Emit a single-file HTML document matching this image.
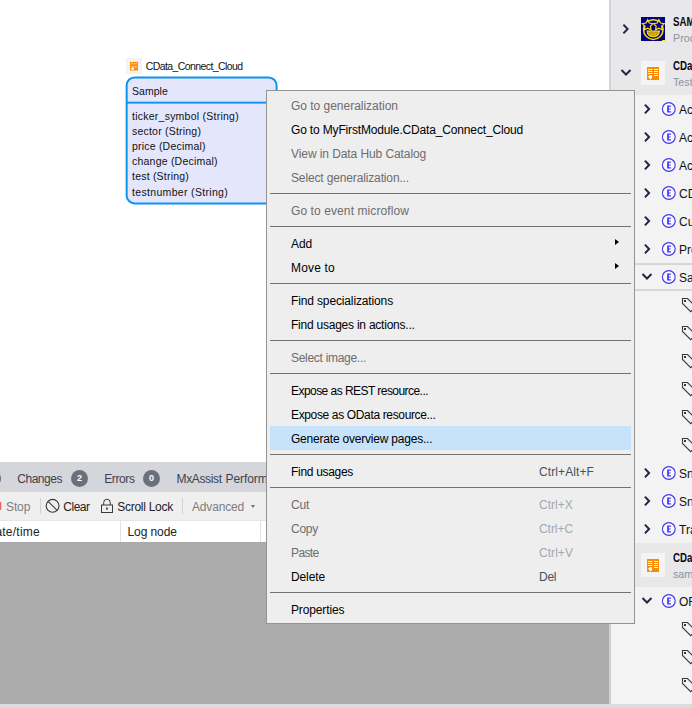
<!DOCTYPE html>
<html><head><meta charset="utf-8">
<style>
*{box-sizing:border-box;margin:0;padding:0}
html,body{width:692px;height:708px;overflow:hidden;background:#fff}
body{position:relative;font-family:"Liberation Sans",sans-serif;font-size:12px;color:#000}
.abs{position:absolute}
/* entity */
#entTitle{left:145.8px;top:60px;font-size:10.5px;color:#111;white-space:nowrap}
#ent{left:126px;top:76px;width:152px;height:129px;border:2px solid transparent}
#ent .hd{height:25px;border-bottom:2px solid transparent;padding:6.5px 0 0 4px;font-size:10.5px;color:#111}
#ent .at{padding:5.5px 0 0 4px;font-size:10.5px;line-height:15px;color:#111;white-space:nowrap}
#ent .at div:last-child{margin-top:1px}
/* bottom pane */
#tabs{left:0;top:462px;width:609px;height:30px;background:#d5d6db}
#tabs>span{position:absolute;top:9.5px;font-size:12px;color:#3a4252;white-space:nowrap}
.badge{position:absolute;top:8px;width:17px;height:17px;border-radius:50%;background:#6b707c;color:#fff;font-size:9px;font-weight:bold;text-align:center;line-height:17px}
#tool{left:0;top:492px;width:609px;height:28px;background:#efefef}
#tool>span{position:absolute;top:7.5px;font-size:12px;color:#222;white-space:nowrap}
#hdr{left:0;top:520px;width:609px;height:22px;background:#fff;border-top:1px solid #e6e6e6}
#hdr>span{position:absolute;top:3.5px;font-size:12px;color:#222;white-space:nowrap}
#grey{left:0;top:542px;width:609px;height:162px;background:#ababab}
#strip{left:609px;top:0;width:2px;height:704px;background:#d0d2d7}
#bot{left:0;top:704px;width:692px;height:4px;background:#dcdcde}
/* right panel */
#rp{left:611px;top:0;width:81px;height:704px;background:#f3f3f3;overflow:hidden}
.rh{position:absolute;left:0;width:81px;background:#e8e8eb}
.bold{position:absolute;left:62px;font-weight:bold;font-size:12px;transform:scaleX(.81);transform-origin:0 0;color:#0a0a0a;white-space:nowrap}
.sub{position:absolute;left:62px;font-size:11.5px;transform:scaleX(.93);transform-origin:0 0;color:#8d92a0;white-space:nowrap}
.trow{position:absolute;left:0;width:81px;height:28px}
.tx{position:absolute;left:68px;font-size:12px;color:#111;white-space:nowrap}
/* menu */
#menu{left:266px;top:90px;width:369px;height:534px;background:#eeeeee;border:1px solid #939393;padding:2px 3px}
.mi{height:24px;position:relative;font-size:12px;line-height:26px;padding-left:21px;white-space:nowrap;color:#000}
.mi.d{color:#6d6d6d}
.mi.hl{background:#c7e3fb}
.mi .sc{position:absolute;left:269px;top:0;color:#46525c}
.mi.d .sc{color:#a3a9af}
.mi .ar{position:absolute;left:345px;top:8px;width:0;height:0;border-left:4px solid #000;border-top:3.5px solid transparent;border-bottom:3.5px solid transparent}
.sep{height:9px;padding-top:4px}
.sep div{height:1px;background:#717171}
</style></head><body>

<div class="abs" style="left:126px;top:58px;width:16px;height:16px;background:#f3f3f3"></div>
<svg class="abs" style="left:129px;top:61px" width="10" height="10" viewBox="129 61 10 10"><rect x="130" y="62" width="8" height="8.500" fill="#ff8a00"/><path d="M131 63.800h2.600M134.400 63.800h2.600M131 66.800h2.600M134.400 66.800h2.600" stroke="#ffd9ad" stroke-width="1" fill="none"/><path d="M131 68.600l1.200 -1h1.600v1.600l-0.800 0.800h-1z" fill="#fff"/></svg>
<div class="abs" id="entTitle"><span class="fit" style="letter-spacing:-0.599px">CData_Connect_Cloud</span></div>
<svg class="abs" style="left:120px;top:70px" width="165" height="140" viewBox="120 70 165 140"><rect x="126.65" y="77.45" width="149.95" height="125.95" rx="8" ry="8" fill="#e4e6fc" stroke="#0b94f2" stroke-width="2"/><rect x="126.65" y="101.7" width="149.95" height="1.9" fill="#0b94f2"/></svg>
<div class="abs" id="ent">
  <div class="hd"><span class="fit" style="letter-spacing:0.048px">Sample</span></div>
  <div class="at"><div><span class="fit" style="letter-spacing:0.244px">ticker_symbol (String)</span></div><div><span class="fit" style="letter-spacing:0.211px">sector (String)</span></div><div><span class="fit" style="letter-spacing:0.207px">price (Decimal)</span></div><div><span class="fit" style="letter-spacing:0.219px">change (Decimal)</span></div><div><span class="fit" style="letter-spacing:0.210px">test (String)</span></div><div><span class="fit" style="letter-spacing:0.328px">testnumber (String)</span></div></div>
</div>

<div class="abs" id="tabs">
  <div class="badge" style="left:-16px"></div>
  <span style="left:17.2px"><span class="fit" style="letter-spacing:-0.448px">Changes</span></span><div class="badge" style="left:71px">2</div>
  <span style="left:104.2px"><span class="fit" style="letter-spacing:-0.393px">Errors</span></span><div class="badge" style="left:143px">0</div>
  <span style="left:176.5px"><span class="fit" style="letter-spacing:-0.363px">MxAssist</span></span><span style="left:225.6px;letter-spacing:-0.1px">Performance Bot</span>
</div>
<div class="abs" id="tool">
  <div class="abs" style="left:0;top:10px;width:1px;height:8px;background:#ee5f6a"></div><div class="abs" style="left:1px;top:10px;width:1px;height:8px;background:#f3cfd2"></div>
  <span style="left:6px;color:#7d7d7d"><span class="fit" style="letter-spacing:-0.122px">Stop</span></span>
  <div class="abs" style="left:40px;top:6px;width:1px;height:16px;background:#d2d2d2"></div>
  <svg class="abs" style="left:45px;top:6px" width="16" height="16" viewBox="0 0 16 16"><circle cx="7.6" cy="7.8" r="6.4" fill="none" stroke="#3a3a3a" stroke-width="1.1"/><path d="M3.100 3.300 L12.1 12.3" stroke="#3a3a3a" stroke-width="1.1"/></svg>
  <span style="left:63.3px"><span class="fit" style="letter-spacing:-0.477px">Clear</span></span>
  <svg class="abs" style="left:100px;top:6px" width="14" height="16" viewBox="0 0 14 16"><rect x="1.5" y="7" width="11" height="7.500" fill="none" stroke="#3a3a3a" stroke-width="1"/><path d="M3.700 7V4.500a3.300 3.300 0 0 1 6.600 0V7" fill="none" stroke="#3a3a3a" stroke-width="1"/><rect x="6.300" y="9.300" width="1.400" height="2.600" fill="#3a3a3a"/></svg>
  <span style="left:117.2px"><span class="fit" style="letter-spacing:-0.270px">Scroll Lock</span></span>
  <div class="abs" style="left:182px;top:6px;width:1px;height:16px;background:#d2d2d2"></div>
  <span style="left:192px;color:#7d7d7d"><span class="fit" style="letter-spacing:-0.159px">Advanced</span></span>
  <div class="abs" style="left:251px;top:13px;width:0;height:0;border-top:3.500px solid #707070;border-left:2.200px solid transparent;border-right:2.200px solid transparent"></div>
</div>
<div class="abs" id="hdr">
  <span style="left:-13.5px"><span class="fit" style="letter-spacing:0.227px">Date/time</span></span>
  <div class="abs" style="left:120px;top:0;width:1px;height:23px;background:#e2e2e2"></div>
  <span style="left:127.5px"><span class="fit" style="letter-spacing:-0.083px">Log node</span></span>
  <div class="abs" style="left:260px;top:0;width:1px;height:23px;background:#e2e2e2"></div>
</div>
<div class="abs" id="grey"></div>
<div class="abs" id="strip"></div>

<div class="abs" id="rp">
  <div class="rh" style="top:0;height:95px"></div>
  <div class="rh" style="top:543px;height:44px"></div>
  <svg class="abs" style="left:0;top:0" width="81" height="704" viewBox="0 0 81 704"><path d="M12.4 24.6 L16.6 29 L12.4 33.4" fill="none" stroke="#1e2840" stroke-width="2"/><rect x="30" y="17" width="24" height="24" fill="#000082"/><circle cx="42.299999999999955" cy="29.6" r="9.8" fill="none" stroke="#f7d716" stroke-width="1.5"/><polygon points="36.7,19.7 38.3,23.0 42.0,23.6 39.4,26.2 40.0,29.8 36.7,28.1 33.4,29.8 34.0,26.2 31.4,23.6 35.1,23.0" fill="#000082" stroke="#f7d716" stroke-width="1.25" stroke-linejoin="miter"/><polygon points="47.9,19.7 49.5,23.0 53.2,23.6 50.6,26.2 51.2,29.8 47.9,28.1 44.6,29.8 45.2,26.2 42.6,23.6 46.3,23.0" fill="#000082" stroke="#f7d716" stroke-width="1.25" stroke-linejoin="miter"/><path d="M36.299999999999955 31.1 h12 q-0.5 5.500 -6 5.500 q-5.500 0 -6 -5.500z" fill="#8a6a20" stroke="#f7d716" stroke-width="1.4"/><path d="M37.799999999999955 33.0h9M39.299999999999955 34.800000000000004h6" stroke="#f7d716" stroke-width="1.1"/><rect x="51" y="40" width="3" height="1" fill="#f7d716"/><path d="M10.5 70.0 L15 74.5 L19.5 70.0" fill="none" stroke="#1e2840" stroke-width="2"/><rect x="30" y="61" width="24" height="24" fill="#f4f4f4"/><rect x="36" y="67" width="12" height="13" fill="#ff8a00"/><rect x="37" y="69" width="4.5" height="1" fill="#fff"/><rect x="37" y="71" width="4.5" height="1" fill="#fff"/><rect x="37" y="73" width="4.5" height="1" fill="#fff"/><rect x="43" y="69" width="4" height="1" fill="#fff"/><rect x="43" y="71" width="4" height="1" fill="#fff"/><rect x="43" y="73" width="4" height="1" fill="#fff"/><rect x="43" y="75" width="4" height="1" fill="#fff"/><path d="M37 76.8 L38.6 75.2 H41 V77.8 L39.8 79.2 L38.6 79.2 L38.6 78.2 z" fill="#fff"/><path d="M33.9 104.6 L38.1 109 L33.9 113.4" fill="none" stroke="#1e2840" stroke-width="2"/><circle cx="57.799999999999955" cy="109" r="6.4" fill="#fbfbff" stroke="#4338f0" stroke-width="1.15"/><path d="M56.1 105.5h4v1.3h-2.2v1.6h1.8v1.2h-1.8v1.6h2.2v1.3h-4z" fill="#4a3df0"/><path d="M33.9 132.6 L38.1 137 L33.9 141.4" fill="none" stroke="#1e2840" stroke-width="2"/><circle cx="57.799999999999955" cy="137" r="6.4" fill="#fbfbff" stroke="#4338f0" stroke-width="1.15"/><path d="M56.1 133.5h4v1.3h-2.2v1.6h1.8v1.2h-1.8v1.6h2.2v1.3h-4z" fill="#4a3df0"/><path d="M33.9 160.6 L38.1 165 L33.9 169.4" fill="none" stroke="#1e2840" stroke-width="2"/><circle cx="57.799999999999955" cy="165" r="6.4" fill="#fbfbff" stroke="#4338f0" stroke-width="1.15"/><path d="M56.1 161.5h4v1.3h-2.2v1.6h1.8v1.2h-1.8v1.6h2.2v1.3h-4z" fill="#4a3df0"/><path d="M33.9 188.6 L38.1 193 L33.9 197.4" fill="none" stroke="#1e2840" stroke-width="2"/><circle cx="57.799999999999955" cy="193" r="6.4" fill="#fbfbff" stroke="#4338f0" stroke-width="1.15"/><path d="M56.1 189.5h4v1.3h-2.2v1.6h1.8v1.2h-1.8v1.6h2.2v1.3h-4z" fill="#4a3df0"/><path d="M33.9 216.6 L38.1 221 L33.9 225.4" fill="none" stroke="#1e2840" stroke-width="2"/><circle cx="57.799999999999955" cy="221" r="6.4" fill="#fbfbff" stroke="#4338f0" stroke-width="1.15"/><path d="M56.1 217.5h4v1.3h-2.2v1.6h1.8v1.2h-1.8v1.6h2.2v1.3h-4z" fill="#4a3df0"/><path d="M33.9 244.6 L38.1 249 L33.9 253.4" fill="none" stroke="#1e2840" stroke-width="2"/><circle cx="57.799999999999955" cy="249" r="6.4" fill="#fbfbff" stroke="#4338f0" stroke-width="1.15"/><path d="M56.1 245.5h4v1.3h-2.2v1.6h1.8v1.2h-1.8v1.6h2.2v1.3h-4z" fill="#4a3df0"/><rect x="24" y="263.4" width="60" height="1.3" fill="#c6c7cf"/><rect x="24" y="289.4" width="60" height="1.3" fill="#c6c7cf"/><path d="M31.5 274.0 L36 278.5 L40.5 274.0" fill="none" stroke="#1e2840" stroke-width="2"/><circle cx="57.799999999999955" cy="277" r="6.4" fill="#fbfbff" stroke="#4338f0" stroke-width="1.15"/><path d="M56.1 273.5h4v1.3h-2.2v1.6h1.8v1.2h-1.8v1.6h2.2v1.3h-4z" fill="#4a3df0"/><path d="M71.5 298.5 h5 l8.2 8.2 l-5 5 l-8.2 -8.2 z" fill="none" stroke="#3a3a3a" stroke-width="1.1"/><rect x="73" y="300" width="2" height="2" fill="#3a3a3a"/><path d="M71.5 326.5 h5 l8.2 8.2 l-5 5 l-8.2 -8.2 z" fill="none" stroke="#3a3a3a" stroke-width="1.1"/><rect x="73" y="328" width="2" height="2" fill="#3a3a3a"/><path d="M71.5 354.5 h5 l8.2 8.2 l-5 5 l-8.2 -8.2 z" fill="none" stroke="#3a3a3a" stroke-width="1.1"/><rect x="73" y="356" width="2" height="2" fill="#3a3a3a"/><path d="M71.5 382.5 h5 l8.2 8.2 l-5 5 l-8.2 -8.2 z" fill="none" stroke="#3a3a3a" stroke-width="1.1"/><rect x="73" y="384" width="2" height="2" fill="#3a3a3a"/><path d="M71.5 410.5 h5 l8.2 8.2 l-5 5 l-8.2 -8.2 z" fill="none" stroke="#3a3a3a" stroke-width="1.1"/><rect x="73" y="412" width="2" height="2" fill="#3a3a3a"/><path d="M71.5 438.5 h5 l8.2 8.2 l-5 5 l-8.2 -8.2 z" fill="none" stroke="#3a3a3a" stroke-width="1.1"/><rect x="73" y="440" width="2" height="2" fill="#3a3a3a"/><path d="M33.9 468.6 L38.1 473 L33.9 477.4" fill="none" stroke="#1e2840" stroke-width="2"/><circle cx="57.799999999999955" cy="473" r="6.4" fill="#fbfbff" stroke="#4338f0" stroke-width="1.15"/><path d="M56.1 469.5h4v1.3h-2.2v1.6h1.8v1.2h-1.8v1.6h2.2v1.3h-4z" fill="#4a3df0"/><path d="M33.9 496.6 L38.1 501 L33.9 505.4" fill="none" stroke="#1e2840" stroke-width="2"/><circle cx="57.799999999999955" cy="501" r="6.4" fill="#fbfbff" stroke="#4338f0" stroke-width="1.15"/><path d="M56.1 497.5h4v1.3h-2.2v1.6h1.8v1.2h-1.8v1.6h2.2v1.3h-4z" fill="#4a3df0"/><path d="M33.9 524.6 L38.1 529 L33.9 533.4" fill="none" stroke="#1e2840" stroke-width="2"/><circle cx="57.799999999999955" cy="529" r="6.4" fill="#fbfbff" stroke="#4338f0" stroke-width="1.15"/><path d="M56.1 525.5h4v1.3h-2.2v1.6h1.8v1.2h-1.8v1.6h2.2v1.3h-4z" fill="#4a3df0"/><rect x="30" y="553" width="24" height="24" fill="#f4f4f4"/><rect x="36" y="559" width="12" height="13" fill="#ff8a00"/><rect x="37" y="561" width="4.5" height="1" fill="#fff"/><rect x="37" y="563" width="4.5" height="1" fill="#fff"/><rect x="37" y="565" width="4.5" height="1" fill="#fff"/><rect x="43" y="561" width="4" height="1" fill="#fff"/><rect x="43" y="563" width="4" height="1" fill="#fff"/><rect x="43" y="565" width="4" height="1" fill="#fff"/><rect x="43" y="567" width="4" height="1" fill="#fff"/><path d="M37 568.8 L38.6 567.2 H41 V569.8 L39.8 571.2 L38.6 571.2 L38.6 570.2 z" fill="#fff"/><path d="M31.5 598.0 L36 602.5 L40.5 598.0" fill="none" stroke="#1e2840" stroke-width="2"/><circle cx="57.799999999999955" cy="601" r="6.4" fill="#fbfbff" stroke="#4338f0" stroke-width="1.15"/><path d="M56.1 597.5h4v1.3h-2.2v1.6h1.8v1.2h-1.8v1.6h2.2v1.3h-4z" fill="#4a3df0"/><path d="M71.5 622.5 h5 l8.2 8.2 l-5 5 l-8.2 -8.2 z" fill="none" stroke="#3a3a3a" stroke-width="1.1"/><rect x="73" y="624" width="2" height="2" fill="#3a3a3a"/><path d="M71.5 650.5 h5 l8.2 8.2 l-5 5 l-8.2 -8.2 z" fill="none" stroke="#3a3a3a" stroke-width="1.1"/><rect x="73" y="652" width="2" height="2" fill="#3a3a3a"/><path d="M71.5 678.5 h5 l8.2 8.2 l-5 5 l-8.2 -8.2 z" fill="none" stroke="#3a3a3a" stroke-width="1.1"/><rect x="73" y="680" width="2" height="2" fill="#3a3a3a"/></svg>
  <div class="bold" style="top:14.7px">SAMPLE</div>
  <div class="sub" style="top:31.8px">Production</div>
  <div class="bold" style="top:58.7px">CData_Connect_Cloud</div>
  <div class="sub" style="top:75.8px">Test</div>
  <div class="tx" style="top:103px">Account</div>
  <div class="tx" style="top:131px">AccountContact</div>
  <div class="tx" style="top:159px">Activity</div>
  <div class="tx" style="top:187px">CData</div>
  <div class="tx" style="top:215px">Customer</div>
  <div class="tx" style="top:243px">Product</div>
  <div class="tx" style="top:271px">Sample</div>
  <div class="tx" style="top:467px">Snowflake</div>
  <div class="tx" style="top:495px">Snowflake2</div>
  <div class="tx" style="top:523px">Transactions</div>
  <div class="bold" style="top:550.7px">CData_Connect</div>
  <div class="sub" style="top:567.8px">sample</div>
  <div class="tx" style="top:595px">ORDERS</div>
</div>

<div class="abs" id="menu">
  <div class="mi d"><span class="lb" style="letter-spacing:-0.020px">Go to generalization</span></div>
  <div class="mi"><span class="lb" style="letter-spacing:-0.157px">Go to MyFirstModule.CData_Connect_Cloud</span></div>
  <div class="mi d"><span class="lb" style="letter-spacing:-0.083px">View in Data Hub Catalog</span></div>
  <div class="mi d"><span class="lb" style="letter-spacing:-0.142px">Select generalization...</span></div>
  <div class="sep"><div></div></div>
  <div class="mi d"><span class="lb" style="letter-spacing:0.093px">Go to event microflow</span></div>
  <div class="sep"><div></div></div>
  <div class="mi"><span class="lb" style="letter-spacing:-0.120px">Add</span><i class="ar"></i></div>
  <div class="mi"><span class="lb" style="letter-spacing:0.159px">Move to</span><i class="ar"></i></div>
  <div class="sep"><div></div></div>
  <div class="mi"><span class="lb" style="letter-spacing:-0.136px">Find specializations</span></div>
  <div class="mi"><span class="lb" style="letter-spacing:-0.232px">Find usages in actions...</span></div>
  <div class="sep"><div></div></div>
  <div class="mi d"><span class="lb" style="letter-spacing:-0.292px">Select image...</span></div>
  <div class="sep"><div></div></div>
  <div class="mi"><span class="lb" style="letter-spacing:-0.546px">Expose as REST resource...</span></div>
  <div class="mi"><span class="lb" style="letter-spacing:-0.355px">Expose as OData resource...</span></div>
  <div class="mi hl"><span class="lb" style="letter-spacing:-0.210px">Generate overview pages...</span></div>
  <div class="sep"><div></div></div>
  <div class="mi"><span class="lb" style="letter-spacing:-0.307px">Find usages</span><span class="sc" style="letter-spacing:0.098px">Ctrl+Alt+F</span></div>
  <div class="sep"><div></div></div>
  <div class="mi d"><span class="lb" style="letter-spacing:-0.229px">Cut</span><span class="sc" style="letter-spacing:0.019px">Ctrl+X</span></div>
  <div class="mi d"><span class="lb" style="letter-spacing:-0.254px">Copy</span><span class="sc" style="letter-spacing:-0.057px">Ctrl+C</span></div>
  <div class="mi d"><span class="lb" style="letter-spacing:-0.617px">Paste</span><span class="sc" style="letter-spacing:0.052px">Ctrl+V</span></div>
  <div class="mi"><span class="lb" style="letter-spacing:-0.115px">Delete</span><span class="sc" style="letter-spacing:-0.272px">Del</span></div>
  <div class="sep"><div></div></div>
  <div class="mi"><span class="lb" style="letter-spacing:-0.130px">Properties</span></div>
</div>
<div class="abs" id="bot"></div>
</body></html>
